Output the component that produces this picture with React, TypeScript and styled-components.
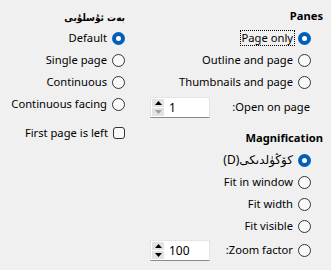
import React from 'react'
import styled, { createGlobalStyle } from 'styled-components'

const GlobalStyle = createGlobalStyle`
  html, body {
    margin: 0;
    padding: 0;
    background: #f0f0f0;
  }
  body {
    font-family: 'Noto Sans', 'DejaVu Sans', sans-serif;
    font-size: 11.2px;
    color: #000;
  }
`

const Page = styled.div`
  direction: rtl;
  display: grid;
  grid-template-columns: 178px 125px;
  column-gap: 20px;
  align-items: start;
  padding: 5px 8px 0 0;
  width: 331px;
  height: 270px;
  box-sizing: border-box;
`

const Column = styled.div`
  display: flex;
  flex-direction: column;
`

const Heading = styled.div<{ $gap?: number }>`
  font-weight: bold;
  height: 22px;
  line-height: 22px;
  margin-top: ${(p) => p.$gap ?? 0}px;

  &:lang(ug) {
    font-family: 'DejaVu Sans Condensed', 'DejaVu Sans', sans-serif;
    font-size: 10px;
    line-height: 26px;
  }
`

const Options = styled.div<{ $indent?: number }>`
  display: flex;
  flex-direction: column;
  padding-right: ${(p) => p.$indent ?? 0}px;
`

const Row = styled.div<{ $height?: number }>`
  display: flex;
  align-items: center;
  gap: 4px;
  height: ${(p) => p.$height ?? 22}px;
`

const SpinRow = styled(Row)`
  justify-content: space-between;
  padding-left: 5px;
`

const LabelGroup = styled.div`
  display: flex;
  align-items: center;
  gap: 4px;
`

const Label = styled.span<{ $focused?: boolean }>`
  white-space: nowrap;
  line-height: 14px;
  padding: 0 1px;
  outline: ${(p) => (p.$focused ? '1px dotted #000' : 'none')};

  &:lang(ug) {
    font-size: 12px;
  }
`

const RadioCircle = styled.span<{ $checked?: boolean }>`
  flex: none;
  width: 13px;
  height: 13px;
  border-radius: 50%;
  box-sizing: border-box;
  border: ${(p) => (p.$checked ? 'none' : '1px solid #333')};
  background: ${(p) => (p.$checked ? '#005fb8' : '#f9f9f9')};
  display: flex;
  align-items: center;
  justify-content: center;

  &::after {
    content: '';
    display: ${(p) => (p.$checked ? 'block' : 'none')};
    width: 5px;
    height: 5px;
    border-radius: 50%;
    background: #fff;
  }
`

const CheckBox = styled.span`
  flex: none;
  width: 12px;
  height: 12px;
  box-sizing: border-box;
  border: 1px solid #333;
  border-radius: 3px;
  background: #f9f9f9;
`

const CheckRow = styled(Row)`
  margin-top: 7px;
`

const Spin = styled.div`
  direction: ltr;
  display: flex;
  align-items: center;
  width: 60px;
  height: 21px;
  box-sizing: border-box;
  background: #fff;
  border: 1px solid #e5e5e5;
  border-bottom: 1px solid #8a8a8a;
`

const SpinButtons = styled.div`
  display: flex;
  flex-direction: column;
  gap: 1px;
  margin: 0 5px 0 1px;
`

const SpinButton = styled.span<{ $disabled?: boolean }>`
  width: 12px;
  height: 8px;
  background: #e3e3e3;
  display: flex;
  align-items: center;
  justify-content: center;
  color: ${(p) => (p.$disabled ? '#a0a0a0' : '#000')};
`

const SpinValue = styled.span`
  font-size: 12px;
`

const Radio: React.FC<{ label: string; checked?: boolean; focused?: boolean; lang?: string }> = ({
  label,
  checked,
  focused,
  lang,
}) => (
  <Row>
    <RadioCircle $checked={checked} />
    <Label $focused={focused} lang={lang}>
      {label}
    </Label>
  </Row>
)

const Arrow: React.FC<{ up?: boolean }> = ({ up }) => (
  <svg width="7" height="4" viewBox="0 0 7 4">
    <path d={up ? 'M0 4 L3.5 0 L7 4 Z' : 'M0 0 L3.5 4 L7 0 Z'} fill="currentColor" />
  </svg>
)

const SpinBox: React.FC<{ value: string; atMin?: boolean }> = ({ value, atMin }) => (
  <Spin>
    <SpinButtons>
      <SpinButton>
        <Arrow up />
      </SpinButton>
      <SpinButton $disabled={atMin}>
        <Arrow />
      </SpinButton>
    </SpinButtons>
    <SpinValue>{value}</SpinValue>
  </Spin>
)

const SpinOption: React.FC<{ label: string; value: string; height: number; radio?: boolean; atMin?: boolean }> = ({
  label,
  value,
  height,
  radio,
  atMin,
}) => (
  <SpinRow $height={height}>
    <LabelGroup>
      {radio && <RadioCircle />}
      <Label>{label}</Label>
    </LabelGroup>
    <SpinBox value={value} atMin={atMin} />
  </SpinRow>
)

export default function App() {
  return (
    <>
      <GlobalStyle />
      <Page>
        <Column>
          <Heading>Panes</Heading>
          <Options $indent={12}>
            <Radio label="Page only" checked focused />
            <Radio label="Outline and page" />
            <Radio label="Thumbnails and page" />
            <SpinOption label="Open on page:" value="1" height={28} atMin />
          </Options>
          <Heading $gap={6}>Magnification</Heading>
          <Options $indent={12}>
            <Radio label="كۆڭۈلدىكى(D)" lang="ug" checked />
            <Radio label="Fit in window" />
            <Radio label="Fit width" />
            <Radio label="Fit visible" />
            <SpinOption label="Zoom factor:" value="100" height={26} radio />
          </Options>
        </Column>
        <Column>
          <Heading lang="ug">بەت ئۇسلۇبى</Heading>
          <Options>
            <Radio label="Default" checked />
            <Radio label="Single page" />
            <Radio label="Continuous" />
            <Radio label="Continuous facing" />
          </Options>
          <CheckRow>
            <CheckBox />
            <Label>First page is left</Label>
          </CheckRow>
        </Column>
      </Page>
    </>
  )
}
